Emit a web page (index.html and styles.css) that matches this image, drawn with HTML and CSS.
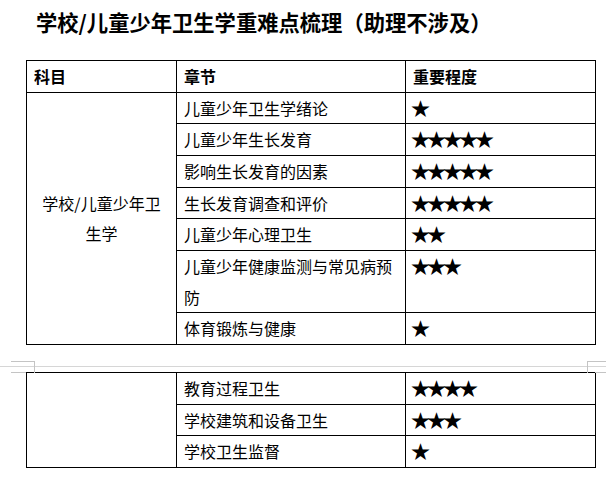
FILE: index.html
```html
<!DOCTYPE html>
<html lang="zh-CN">
<head>
<meta charset="utf-8">
<title>学校/儿童少年卫生学重难点梳理</title>
<link rel="stylesheet" href="styles.css">
</head>
<body>
<div class="page">
  <h1 class="title">学校/儿童少年卫生学重难点梳理（助理不涉及）</h1>
  <table class="grid">
    <colgroup><col class="c1"><col class="c2"><col class="c3"></colgroup>
    <tr class="head"><th>科目</th><th>章节</th><th>重要程度</th></tr>
    <tr><td rowspan="7" class="subject">学校/儿童少年卫<br>生学</td><td>儿童少年卫生学绪论</td><td class="stars">★</td></tr>
    <tr><td>儿童少年生长发育</td><td class="stars">★★★★★</td></tr>
    <tr><td>影响生长发育的因素</td><td class="stars">★★★★★</td></tr>
    <tr><td>生长发育调查和评价</td><td class="stars">★★★★★</td></tr>
    <tr><td>儿童少年心理卫生</td><td class="stars">★★</td></tr>
    <tr><td>儿童少年健康监测与常见病预防</td><td class="stars">★★★</td></tr>
    <tr><td>体育锻炼与健康</td><td class="stars">★</td></tr>
  </table>
  <div class="pagebreak">
    <span class="mark mark-left"></span>
    <span class="mark mark-right"></span>
  </div>
  <table class="grid">
    <colgroup><col class="c1"><col class="c2"><col class="c3"></colgroup>
    <tr><td rowspan="3" class="subject"></td><td>教育过程卫生</td><td class="stars">★★★★</td></tr>
    <tr><td>学校建筑和设备卫生</td><td class="stars">★★★</td></tr>
    <tr><td>学校卫生监督</td><td class="stars">★</td></tr>
  </table>
</div>
</body>
</html>
```
FILE: styles.css
```css
html, body {
  margin: 0;
  padding: 0;
  background: #fff;
}
body {
  font-family: "Noto Sans CJK SC", "DejaVu Sans", sans-serif;
  color: #000;
}
.page {
  width: 606px;
  padding-top: 8px;
}
.title {
  margin: 0 0 24px 0;
  padding-left: 36px;
  font-size: 21.3px;
  line-height: 28px;
  font-weight: bold;
}
.grid {
  margin-left: 26px;
  width: 569px;
  border-collapse: collapse;
  table-layout: fixed;
  font-size: 16px;
}
.grid .c1 { width: 150px; }
.grid .c2 { width: 229px; }
.grid .c3 { width: 190px; }
.grid th,
.grid td {
  border: 1px solid #000;
  padding: 0 7px;
  line-height: 30.67px;
  height: 30.67px;
  text-align: left;
  vertical-align: top;
  font-weight: normal;
}
.grid th {
  font-weight: bold;
}
.grid td.subject {
  text-align: center;
  vertical-align: middle;
}
.grid td.stars {
  font-size: 19px;
  letter-spacing: -3px;
  padding-left: 5px;
  white-space: nowrap;
}
.pagebreak {
  position: relative;
  height: 27px;
}
.pagebreak::before {
  content: "";
  position: absolute;
  left: 0;
  right: 0;
  top: 21px;
  border-top: 1px solid #d6d6d6;
}
.mark {
  position: absolute;
  top: 16px;
  height: 11px;
  border-top: 1px solid #c4c4c4;
}
.mark::after {
  content: "";
  position: absolute;
  top: 10px;
  height: 0;
  border-top: 1px solid #c4c4c4;
}
.mark-left {
  left: 11px;
  width: 23px;
  border-right: 1px solid #c4c4c4;
}
.mark-left::after {
  left: 0;
  width: 15px;
}
.mark-right {
  left: 587px;
  right: 0;
  border-left: 1px solid #c4c4c4;
}
.mark-right::after {
  left: 7px;
  right: 0;
}
```
